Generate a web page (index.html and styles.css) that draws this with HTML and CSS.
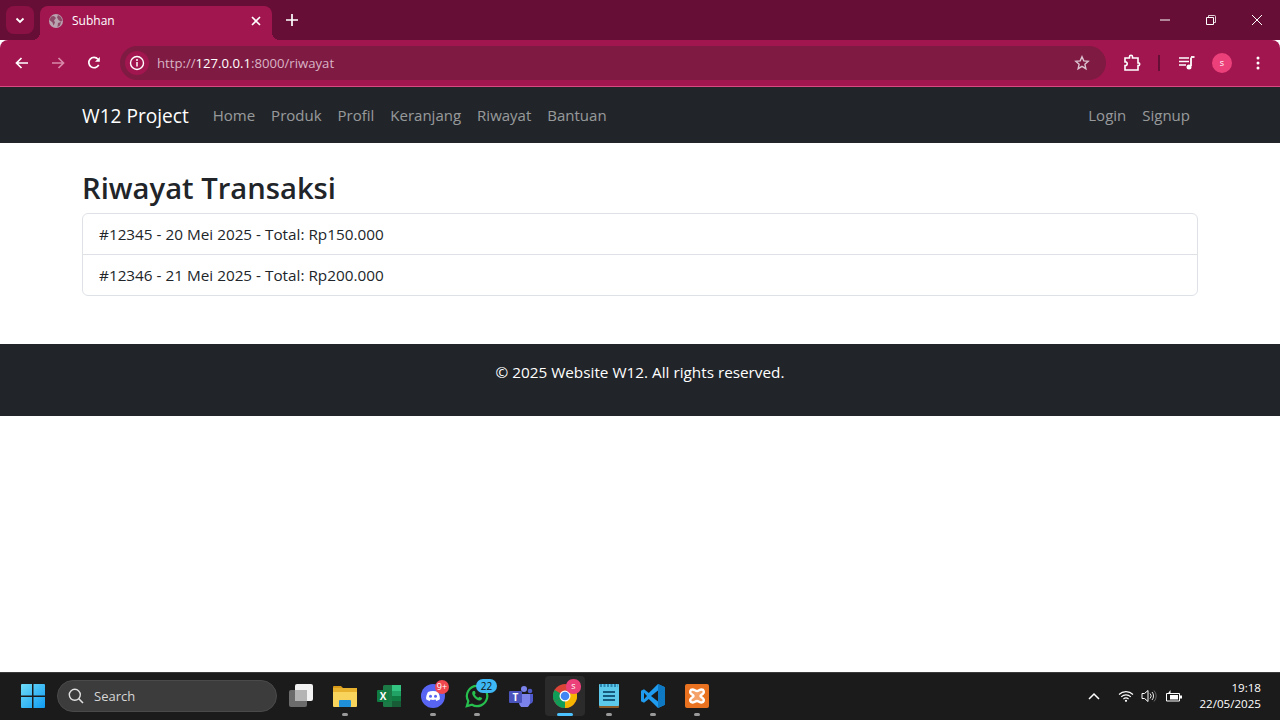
FILE: index.html

```html
<!DOCTYPE html>
<html lang="id">
<head>
    <meta charset="UTF-8">
    <title>Subhan</title>
    <link rel="stylesheet" href="styles.css">
</head>
<body>

    <div class="tabstrip">
        <button class="tab-menu">
            <svg width="12" height="12" viewBox="0 0 12 12"><path d="M2.500 4.500 6 8l3.500-3.500" fill="none" stroke="#fff" stroke-width="1.800"/></svg>
        </button>
        <div class="tab">
            <svg class="tab-globe" width="16" height="16" viewBox="0 0 16 16"><circle cx="8" cy="8" r="7" fill="#b9a3ae"/><path d="M3 3.500 6 3l2 2-2 2.500 1 2-1.500 3-1-3L1.500 7zM10 2l3 2 1.500 4-2 .5-2-1.500-1.500-2.500zM10 10l3-1-1 3.500-2.500 1.500z" fill="#8c4a68"/></svg>
            <span class="tab-title">Subhan</span>
            <svg width="10" height="10" viewBox="0 0 10 10"><path d="M1 1l8 8M9 1 1 9" stroke="#fff" stroke-width="1.600"/></svg>
        </div>
        <svg class="tab-new" width="12" height="12" viewBox="0 0 12 12"><path d="M6 0v12M0 6h12" stroke="#fff" stroke-width="1.700"/></svg>
        <div class="window-btns">
            <svg width="10" height="10" viewBox="0 0 10 10"><path d="M0 5h10" stroke="#fff"/></svg>
            <svg width="10" height="10" viewBox="0 0 10 10"><path d="M.5 2.500h7v7h-7z" fill="none" stroke="#fff"/><path d="M2.500 2V.500h6a1 1 0 0 1 1 1v6H8" fill="none" stroke="#fff" stroke-width=".8"/></svg>
            <svg width="10" height="10" viewBox="0 0 10 10"><path d="M0 0l10 10M10 0 0 10" stroke="#fff"/></svg>
        </div>
    </div>

    <div class="toolbar">
        <svg width="14" height="12" viewBox="0 0 14 12"><path d="M13 6H2M6.500 1 1.500 6l5 5" fill="none" stroke="#fff" stroke-width="1.700"/></svg>
        <svg class="nav-off" width="14" height="12" viewBox="0 0 14 12"><path d="M1 6h11M7.500 1l5 5-5 5" fill="none" stroke="#d88aa8" stroke-width="1.700"/></svg>
        <svg class="nav-reload" width="14" height="14" viewBox="0 0 14 14"><path d="M11.700 8.800A5.200 5.200 0 1 1 11 3.200" fill="none" stroke="#fff" stroke-width="1.700"/><path d="M12.800 1v4.800H8z" fill="#fff"/></svg>
        <div class="omnibox">
            <span class="site-info">
                <svg width="16" height="16" viewBox="0 0 16 16"><circle cx="8" cy="8" r="6.500" fill="none" stroke="#fff" stroke-width="1.400"/><path d="M8 7v4.500" stroke="#fff" stroke-width="1.500"/><circle cx="8" cy="4.900" r="1" fill="#fff"/></svg>
            </span>
            <span class="url">http://<b>127.0.0.1</b>:8000/riwayat</span>
            <svg class="star" width="16" height="16" viewBox="0 0 16 16"><path d="M8 1.800l1.800 4.100 4.400.4-3.300 3 1 4.400L8 11.400l-3.900 2.300 1-4.400-3.300-3 4.400-.4z" fill="none" stroke="#dcc3cf" stroke-width="1.400"/></svg>
        </div>
        <svg class="ext" width="18" height="18" viewBox="0 0 18 18"><path d="M2 4h4.500V2.800a1.500 1.500 0 0 1 3 0V4H15v5h1a1.500 1.500 0 0 1 0 2.500h-1V16H2v-4.500h1.200a2 2 0 0 0 0-3.500H2z" fill="none" stroke="#fff" stroke-width="1.600"/></svg>
        <span class="toolbar-sep"></span>
        <svg class="media" width="16" height="14" viewBox="0 0 16 14"><path d="M0 2h10M0 5.500h10M0 9h7" stroke="#fff" stroke-width="1.500"/><path d="M12 1.500V10" stroke="#fff" stroke-width="1.800"/><path d="M12 1h3.500" stroke="#fff" stroke-width="1.800"/><circle cx="10" cy="11" r="2.500" fill="#fff"/></svg>
        <span class="avatar">s</span>
        <svg class="kebab" width="4" height="14" viewBox="0 0 4 14"><circle cx="2" cy="2" r="1.500" fill="#fff"/><circle cx="2" cy="7" r="1.500" fill="#fff"/><circle cx="2" cy="12" r="1.500" fill="#fff"/></svg>
    </div>

    <nav class="navbar">
        <div class="container nav-inner">
            <a class="brand">W12 Project</a>
            <a class="nav-link">Home</a>
            <a class="nav-link">Produk</a>
            <a class="nav-link">Profil</a>
            <a class="nav-link">Keranjang</a>
            <a class="nav-link">Riwayat</a>
            <a class="nav-link">Bantuan</a>
            <a class="nav-link nav-push">Login</a>
            <a class="nav-link">Signup</a>
        </div>
    </nav>

    <main class="page">
        <div class="container content">
            <h1>Riwayat Transaksi</h1>
            <ul class="list-group">
                <li>#12345 - 20 Mei 2025 - Total: Rp150.000</li>
                <li>#12346 - 21 Mei 2025 - Total: Rp200.000</li>
            </ul>
        </div>
        <footer class="footer">© 2025 Website W12. All rights reserved.</footer>
    </main>

    <div class="taskbar">
        <span class="start">
            <svg width="24" height="24" viewBox="0 0 24 24">
                <defs><linearGradient id="win" x1="0" y1="0" x2="1" y2="1"><stop offset="0" stop-color="#6fdcf8"/><stop offset="1" stop-color="#0f9bf2"/></linearGradient></defs>
                <path d="M0 1a1 1 0 0 1 1-1h10v11.500H0zM12.500 0H23a1 1 0 0 1 1 1v10.500H12.500zM0 13h11v11H1a1 1 0 0 1-1-1zM12.500 13H24v10a1 1 0 0 1-1 1H12.500z" fill="url(#win)"/>
            </svg>
        </span>
        <div class="search">
            <svg width="16" height="16" viewBox="0 0 16 16"><circle cx="6.800" cy="6.800" r="5.500" fill="none" stroke="#e0e0e0" stroke-width="1.400"/><path d="M10.800 10.800 15 15" stroke="#e0e0e0" stroke-width="1.600"/></svg>
            <span>Search</span>
        </div>
        <span class="task">
            <svg width="26" height="24" viewBox="0 0 26 24"><rect x="1" y="6" width="18" height="17" rx="2" fill="#6b6b6b"/><rect x="7" y="0" width="18" height="17" rx="2" fill="#f2f2f2"/><rect x="7" y="6" width="12" height="11" fill="#b4b4b4"/></svg>
        </span>
        <span class="task open">
            <svg width="24" height="22" viewBox="0 0 24 22"><path d="M0 2a1 1 0 0 1 1-1h7l2 2h-10z" fill="#d99a1a"/><rect y="3" width="24" height="19" rx="1" fill="#f9d45c"/><rect y="3" width="24" height="4" fill="#e8b22e"/><rect x="6" y="15" width="12" height="7" rx="1" fill="#1f8fd8"/></svg>
        </span>
        <span class="task">
            <svg width="24" height="22" viewBox="0 0 24 22"><rect x="6" width="18" height="22" rx="1.500" fill="#1b7a46"/><rect x="15" y="0" width="9" height="6" fill="#33c481"/><rect x="15" y="6" width="9" height="5" fill="#21a366"/><rect x="15" y="11" width="9" height="5" fill="#107c41"/><rect x="15" y="16" width="9" height="6" fill="#185c37"/><rect y="5" width="12" height="12" rx="1" fill="#107c41"/><text class="xl" x="6" y="15">X</text></svg>
        </span>
        <span class="task open">
            <svg width="24" height="24" viewBox="0 0 24 24"><circle cx="12" cy="12" r="12" fill="#5865f2"/><path d="M7 8c3-1.400 7-1.400 10 0 1.300 2.300 2 4.700 1.900 7.200-1.100.9-2.300 1.400-3.500 1.700l-.9-1.400c-1.600.5-3.400.5-5 0l-.9 1.400c-1.200-.3-2.400-.8-3.500-1.700C5 12.700 5.700 10.300 7 8z" fill="#fff"/><circle cx="9.500" cy="12.300" r="1.500" fill="#5865f2"/><circle cx="14.500" cy="12.300" r="1.500" fill="#5865f2"/></svg>
            <span class="badge badge-red">9+</span>
        </span>
        <span class="task open">
            <svg width="24" height="24" viewBox="0 0 26 26"><path d="M13 2a11 11 0 0 0-9.400 16.600L2 24l5.600-1.500A11 11 0 1 0 13 2z" fill="none" stroke="#27c04f" stroke-width="2.400"/><path d="M9 7.500c-1.500 1-1.800 3 0 5.800 2 3 5 4.800 7.300 4.500 1.500-.2 2.300-1.400 2.300-2.600l-3-1.500-1.200 1.300c-1.500-.5-3-2-3.800-3.800l1-1.300L10.600 7.500z" fill="#27c04f"/></svg>
            <span class="badge badge-blue">22</span>
        </span>
        <span class="task">
            <svg width="24" height="22" viewBox="0 0 24 22"><circle cx="15" cy="4" r="3" fill="#7b83eb"/><circle cx="21" cy="6" r="2.300" fill="#5059c9"/><path d="M17 9h7v7a4 4 0 0 1-5 3z" fill="#5059c9"/><path d="M8 9h13v8a5.500 5.500 0 0 1-11 1z" fill="#7b83eb"/><rect y="6" width="13" height="12" rx="1" fill="#4b53bc"/><text class="tm" x="6.500" y="15.500">T</text></svg>
        </span>
        <span class="task active">
            <svg width="24" height="24" viewBox="0 0 24 24"><circle cx="12" cy="12" r="12" fill="#db4437"/><path d="M12 12 1.600 18A12 12 0 0 1 1.600 6z" fill="#0f9d58"/><path d="M12 12 22.400 6A12 12 0 0 1 12 24z" fill="#f4b400"/><path d="M12 12 12 24A12 12 0 0 1 1.600 18z" fill="#0f9d58"/><circle cx="12" cy="12" r="5.500" fill="#fff"/><circle cx="12" cy="12" r="4.300" fill="#4285f4"/></svg>
            <span class="badge badge-pink">s</span>
        </span>
        <span class="task open">
            <svg width="20" height="24" viewBox="0 0 20 24"><rect width="20" height="24" rx="1" fill="#8b5a2b"/><rect width="20" height="22" rx="1" fill="#5cc8ea"/><path d="M1 1.500h18" stroke="#2a86b3" stroke-width="3" stroke-dasharray="2 1.500"/><path d="M4 8h12M4 12h12M4 16h12" stroke="#15597c" stroke-width="1.800"/></svg>
        </span>
        <span class="task open">
            <svg width="24" height="24" viewBox="0 0 24 24"><path d="M17 0 24 3.300v17.400L17 24 7.800 15 3 18.800 0 17.300V6.700L3 5.200 7.800 9z" fill="#1f9cf0"/><path d="M17 6.500 10 12l7 5.500z" fill="#1b1b1b"/><path d="M3 8.800v6.400L6 12z" fill="#1b1b1b"/><path d="M17 0 24 3.300v17.400L17 24z" fill="#0f78c2"/></svg>
        </span>
        <span class="task open">
            <svg width="24" height="24" viewBox="0 0 24 24"><rect width="24" height="24" rx="2" fill="#e8721f"/><path d="M7.500 5.500c2 0 2.800 1.500 4.500 1.500s2.500-1.500 4.500-1.500c2.500 0 3 2.800 1.500 4.200C16.700 11 15.500 11 15.500 12s1.200 1 2.500 2.300c1.500 1.400 1 4.200-1.500 4.200-2 0-2.800-1.500-4.500-1.500s-2.500 1.500-4.500 1.500c-2.500 0-3-2.800-1.500-4.200C7.300 13 8.500 13 8.500 12s-1.200-1-2.500-2.300C4.500 8.300 5 5.500 7.500 5.500z" fill="#f4a26a" stroke="#fff" stroke-width="2.400"/></svg>
        </span>
        <div class="tray">
            <svg class="tray-up" width="12" height="8" viewBox="0 0 12 8"><path d="M1 7l5-5 5 5" fill="none" stroke="#fff" stroke-width="1.500"/></svg>
            <svg class="tray-wifi" width="16" height="12" viewBox="0 0 16 12"><path d="M1 4.500a10 10 0 0 1 14 0M3.200 6.800a7 7 0 0 1 9.600 0M5.400 9a4 4 0 0 1 5.200 0" fill="none" stroke="#fff" stroke-width="1.100"/><circle cx="8" cy="10.800" r="1.100" fill="#fff"/></svg>
            <svg class="tray-vol" width="16" height="14" viewBox="0 0 16 14"><path d="M1 4.500h2.500L7 1.500v11l-3.500-3H1z" fill="none" stroke="#fff"/><path d="M9 4.500a3.500 3.500 0 0 1 0 5M11 3a6 6 0 0 1 0 8" fill="none" stroke="#fff" stroke-width=".9"/><path d="M13 1.500a8 8 0 0 1 0 11" fill="none" stroke="#666"/></svg>
            <svg class="tray-bat" width="16" height="12" viewBox="0 0 16 12"><path d="M.5 3.500h13v7.500H.500z" fill="none" stroke="#fff"/><path d="M4 5h8v4.500H4z" fill="#fff"/><path d="M14 5.500h2v3h-2zM1.500 4 4.500 0v3z" fill="#fff"/></svg>
            <div class="clock">
                <span>19:18</span>
                <span>22/05/2025</span>
            </div>
        </div>
    </div>

</body>
</html>
```

FILE: styles.css

```css
* {
    box-sizing: border-box;
}
body {
    margin: 0;
    height: 720px;
    display: flex;
    flex-direction: column;
    overflow: hidden;
    font-family: "Open Sans", "Noto Sans", Arial, sans-serif;
    font-size: 15.300px;
    line-height: 24px;
    color: #212529;
    background: #fff;
}

/* browser tabs */
.tabstrip {
    height: 40px;
    flex: none;
    display: flex;
    align-items: flex-start;
    padding: 6px 0 0 6px;
    background: #660e35;
}
.tab-menu {
    width: 28px;
    height: 28px;
    padding: 0;
    border: none;
    border-radius: 8px;
    background: #8a1144;
    display: flex;
    align-items: center;
    justify-content: center;
}
.tab {
    position: relative;
    width: 232px;
    height: 34px;
    margin-left: 6px;
    padding: 0 11px 5px 8px;
    display: flex;
    align-items: center;
    border-radius: 8px 8px 0 0;
    background: #a21650;
}
.tab::before,
.tab::after {
    content: "";
    position: absolute;
    bottom: 0;
    width: 8px;
    height: 8px;
    background: radial-gradient(circle at 0 0, #660e35 8px, #a21650 8px);
}
.tab::before {
    left: -8px;
}
.tab::after {
    right: -8px;
    background: radial-gradient(circle at 100% 0, #660e35 8px, #a21650 8px);
}
.tab-globe {
    flex: none;
}
.tab-title {
    flex: 1;
    margin-left: 8px;
    font-size: 12px;
    color: #fff;
}
.tab-new {
    margin: 8px 0 0 14px;
}
.window-btns {
    margin-left: auto;
    height: 28px;
    display: flex;
    align-items: center;
    gap: 36px;
    padding: 0 18px 0 0;
}

/* browser toolbar */
.toolbar {
    height: 47px;
    flex: none;
    display: flex;
    align-items: center;
    padding: 0 15px 1px 15px;
    border-radius: 8px 8px 0 0;
    border-bottom: 1px solid #d94a80;
    background: #a21650;
}
.nav-off {
    margin-left: 22px;
}
.nav-reload {
    margin-left: 22px;
}
.omnibox {
    width: 986px;
    height: 34px;
    margin-left: 19px;
    padding: 0 16px 0 5px;
    display: flex;
    align-items: center;
    border-radius: 17px;
    background: #7f1a42;
}
.site-info {
    width: 24px;
    height: 24px;
    display: flex;
    align-items: center;
    justify-content: center;
    border-radius: 50%;
    background: #a21650;
}
.url {
    flex: 1;
    margin-left: 8px;
    font-size: 13.150px;
    color: #d8b4c5;
}
.url b {
    font-weight: 400;
    color: #fff;
}
.ext {
    margin-left: 17px;
}
.toolbar-sep {
    width: 2px;
    height: 16px;
    margin-left: 17px;
    background: #660e35;
}
.media {
    margin-left: 19px;
}
.avatar {
    width: 20px;
    height: 20px;
    margin-left: 17px;
    border-radius: 50%;
    background: #ec407a;
    color: #fff;
    font-size: 9px;
    line-height: 20px;
    text-align: center;
}
.kebab {
    margin-left: 24px;
}

/* site */
.container {
    width: 1140px;
    margin: 0 auto;
    padding: 0 12px;
}
.navbar {
    height: 56px;
    flex: none;
    background: #212529;
}
.nav-inner {
    height: 100%;
    display: flex;
    align-items: center;
}
.brand {
    margin-right: 16px;
    padding-top: 1px;
    font-size: 19.100px;
    color: #fff;
}
.nav-link {
    padding: 0 8px;
    font-size: 15px;
    color: rgba(255, 255, 255, .55);
}
.nav-push {
    margin-left: auto;
}
.page {
    flex: 1;
    background: #fff;
}
.content {
    padding-top: 24px;
}
h1 {
    margin: 0 0 6px;
    padding-top: 2px;
    font-size: 29.200px;
    font-weight: 600;
    line-height: 38.400px;
}
.list-group {
    margin: 0;
    padding: 0;
    list-style: none;
    border: 1px solid #dee2e6;
    border-radius: 6px;
}
.list-group li {
    height: 40px;
    padding: 8px 16px;
}
.list-group li + li {
    height: 41px;
    border-top: 1px solid #dee2e6;
}
.footer {
    height: 72px;
    margin-top: 48px;
    padding-top: 16px;
    background: #212529;
    color: #fff;
    text-align: center;
}

/* windows taskbar */
.taskbar {
    height: 48px;
    flex: none;
    display: flex;
    align-items: center;
    padding: 0 0 1px 11px;
    border-top: 1px solid #3a3a3a;
    background: #1b1b1b;
}
.start {
    width: 44px;
    display: flex;
    justify-content: center;
}
.search {
    width: 220px;
    height: 32px;
    margin: 0 2px;
    padding-left: 10px;
    display: flex;
    align-items: center;
    gap: 10px;
    border: 1px solid #4a4a4a;
    border-radius: 16px;
    background: #3c3c3c;
    color: #d6d6d6;
    font-size: 13px;
}
.task {
    position: relative;
    width: 44px;
    height: 40px;
    display: flex;
    align-items: center;
    justify-content: center;
}
.task.open::after,
.task.active::after {
    content: "";
    position: absolute;
    left: 19px;
    bottom: 0;
    width: 6px;
    height: 3px;
    border-radius: 2px;
    background: #9a9a9a;
}
.task.active {
    width: 40px;
    margin: 0 2px;
    border-radius: 4px;
    background: #2b2b2b;
}
.task.active::after {
    left: 12px;
    width: 16px;
    background: #4cc2ff;
}
.badge {
    position: absolute;
    top: 4px;
    right: 6px;
    width: 14px;
    height: 14px;
    border-radius: 7px;
    color: #fff;
    font-size: 9px;
    line-height: 14px;
    text-align: center;
}
.badge-red {
    background: #f0484e;
}
.badge-blue {
    top: 3px;
    right: 2px;
    width: 21px;
    background: #3db8f5;
    color: #111;
    font-size: 10px;
}
.badge-pink {
    top: 3px;
    right: 4px;
    width: 15px;
    height: 15px;
    background: #ec407a;
}
.xl {
    fill: #fff;
    font-size: 10px;
    font-weight: 700;
    text-anchor: middle;
}
.tm {
    fill: #fff;
    font-size: 10px;
    font-weight: 700;
    text-anchor: middle;
}
.tray {
    flex: 1;
    display: flex;
    align-items: center;
    padding-right: 19px;
}
.tray-up {
    margin-left: 369px;
}
.tray-wifi {
    margin-left: 18px;
}
.tray-vol {
    margin-left: 7px;
}
.tray-bat {
    margin-left: 9px;
}
.clock {
    margin-left: auto;
    display: flex;
    flex-direction: column;
    align-items: flex-end;
    color: #fff;
    font-size: 11.600px;
    line-height: 16px;
}
```
